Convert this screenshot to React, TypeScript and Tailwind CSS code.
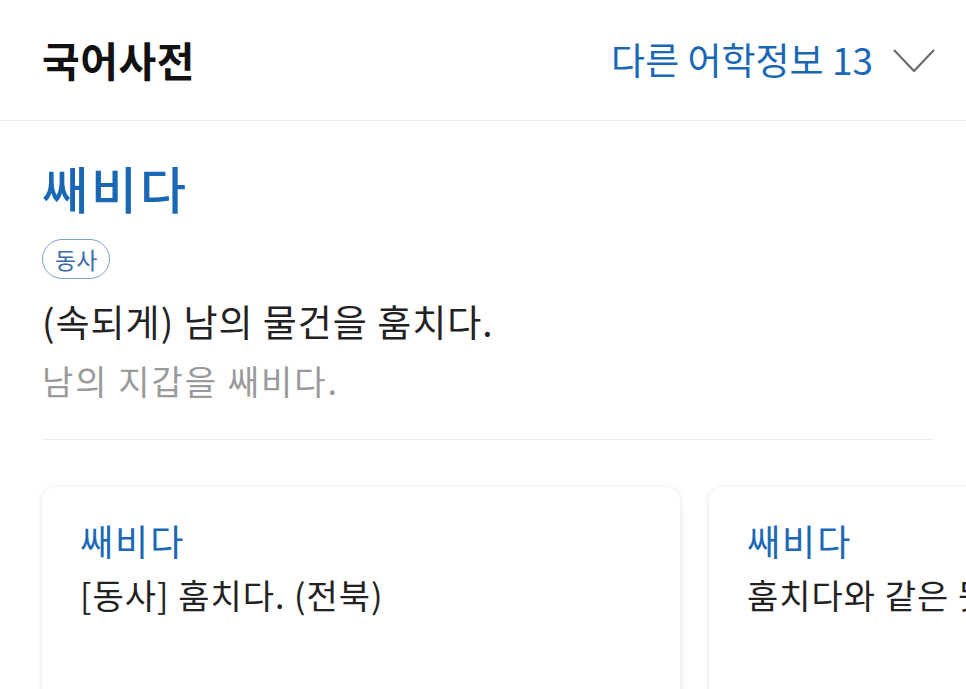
const font = { fontFamily: '"Noto Sans CJK KR", "Noto Sans", sans-serif' };

function Card({ word, meaning }: { word: string; meaning: string }) {
  return (
    <div className="w-[638px] shrink-0 h-[240px] rounded-[14px] bg-white shadow-[0_1px_6px_rgba(0,0,0,0.12)] px-[38px] pt-[28px]">
      <div className="text-[36px] leading-[50px] text-[#1a68b5] tracking-[2px]">{word}</div>
      <div className="text-[34px] leading-[48px] text-[#222] tracking-[1px] mt-[6px] whitespace-nowrap">{meaning}</div>
    </div>
  );
}

export default function App() {
  return (
    <div className="w-[966px] h-[689px] overflow-hidden bg-white" style={font}>
      {/* Header */}
      <div className="h-[121px] flex items-center justify-between pl-[42px] pr-[31px] border-b border-[#ececec]">
        <h1 className="text-[41px] font-bold text-[#111] tracking-[0.5px]">국어사전</h1>
        <div className="flex items-center gap-[20px]">
          <span className="text-[37px] text-[#1a68b5]">다른 어학정보 13</span>
          <svg width="42" height="26" viewBox="0 0 42 26" fill="none" className="mt-[2px]">
            <polyline points="1,2 21,23 41,2" stroke="#666" strokeWidth="2" />
          </svg>
        </div>
      </div>

      {/* Entry */}
      <div className="pl-[42px] pr-[32px] pt-[30px]">
        <h2 className="text-[50px] leading-[72px] font-medium text-[#1a68b5] tracking-[3px]">쌔비다</h2>
        <div className="mt-[16px] inline-flex items-center h-[40px] px-[12px] rounded-full border-[1.5px] border-[#7a9fcc] text-[23px] text-[#3a6aa8]">
          동사
        </div>
        <p className="mt-[16px] text-[37px] leading-[52px] text-[#222] tracking-[1px]">(속되게) 남의 물건을 훔치다.</p>
        <p className="mt-[10px] text-[34px] leading-[48px] text-[#9a9a9a] tracking-[2px]">남의 지갑을 쌔비다.</p>
        <div className="mt-[34px] border-t border-[#ececec]" />
      </div>

      {/* Related cards */}
      <div className="flex gap-[29px] pl-[42px] pt-[47px]">
        <Card word="쌔비다" meaning="[동사] 훔치다. (전북)" />
        <Card word="쌔비다" meaning="훔치다와 같은 뜻" />
      </div>
    </div>
  );
}
